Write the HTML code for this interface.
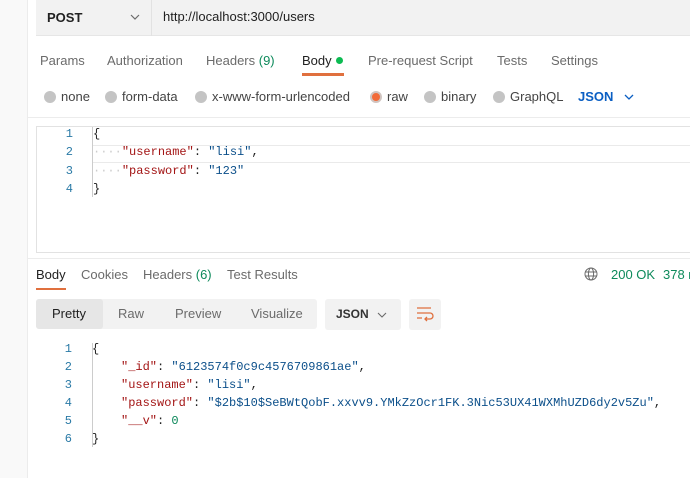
<!DOCTYPE html>
<html><head><meta charset="utf-8"><style>
*{margin:0;padding:0;box-sizing:border-box}
body{width:690px;height:478px;overflow:hidden;background:#fff;font-family:"Liberation Sans",sans-serif;font-size:13px;color:#212121;position:relative}
.a{position:absolute;white-space:nowrap}
.g{color:#6b6b6b}
.m{font-family:"Liberation Mono",monospace;font-size:12px}
.ln{color:#2a7aa6;text-align:right;width:20px}
.k{color:#a31515}.s{color:#0b4f8a}.n{color:#098658}
.dot{position:absolute;width:12px;height:12px;border-radius:50%;background:#c4c4c4}
</style></head><body>
<div class="a" style="left:0;top:0;width:28px;height:478px;background:#f9f9f9;border-right:1px solid #ececec"></div>
<div class="a" style="left:36px;top:0;width:654px;height:36px;background:#f2f2f2;border-bottom:1px solid #e6e6e6"></div>
<div class="a" style="left:151px;top:0;width:1px;height:36px;background:#e2e2e2"></div>
<div class="a" style="left:47px;top:10px;font-weight:bold;font-size:13px;color:#212121">POST</div>
<svg class="a" style="left:130px;top:13px" width="10" height="8"><path d="M1 2l4 4 4-4" fill="none" stroke="#6b6b6b" stroke-width="1.2"/></svg>
<div class="a" style="left:163px;top:9px;color:#212121">http://localhost:3000/users</div>

<div class="a g" style="left:40px;top:53px">Params</div>
<div class="a g" style="left:107px;top:53px">Authorization</div>
<div class="a g" style="left:206px;top:53px">Headers <span style="color:#0d8a5b">(9)</span></div>
<div class="a" style="left:302px;top:53px;color:#212121">Body</div>
<div class="a" style="left:336px;top:57px;width:7px;height:7px;border-radius:50%;background:#0cbb52"></div>
<div class="a" style="left:302px;top:73px;width:42px;height:3px;background:#e0703e"></div>
<div class="a g" style="left:368px;top:53px">Pre-request Script</div>
<div class="a g" style="left:497px;top:53px">Tests</div>
<div class="a g" style="left:551px;top:53px">Settings</div>

<div class="dot" style="left:44px;top:91px"></div><div class="a g" style="left:61px;top:89px;color:#444">none</div>
<div class="dot" style="left:105px;top:91px"></div><div class="a" style="left:122px;top:89px;color:#444">form-data</div>
<div class="dot" style="left:195px;top:91px"></div><div class="a" style="left:212px;top:89px;color:#444">x-www-form-urlencoded</div>
<div class="dot" style="left:370px;top:91px;background:#f26b3a;border:2px solid #d0c4c0"></div><div class="a" style="left:387px;top:89px;color:#444">raw</div>
<div class="dot" style="left:424px;top:91px"></div><div class="a" style="left:441px;top:89px;color:#444">binary</div>
<div class="dot" style="left:493px;top:91px"></div><div class="a" style="left:510px;top:89px;color:#444">GraphQL</div>
<div class="a" style="left:578px;top:89px;color:#0b5fc3;font-weight:bold">JSON</div>
<svg class="a" style="left:624px;top:93px" width="10" height="8"><path d="M1 2l4 4 4-4" fill="none" stroke="#0b5fc3" stroke-width="1.3"/></svg>
<div class="a" style="left:28px;top:117px;width:662px;height:1px;background:#ececec"></div>

<div class="a" style="left:36px;top:126px;width:660px;height:127px;border:1px solid #e2e2e2"></div>
<div class="a" style="left:93px;top:145px;width:597px;height:18px;border-top:1px solid #eaeaea;border-bottom:1px solid #eaeaea"></div>
<div class="a m ln" style="left:53px;top:127px">1</div>
<div class="a m ln" style="left:53px;top:145px">2</div>
<div class="a m ln" style="left:53px;top:164px">3</div>
<div class="a m ln" style="left:53px;top:182px">4</div>
<div class="a m" style="left:93px;top:127px">{</div>
<div class="a m" style="left:93px;top:145px"><span style="color:#ccc">····</span><span class="k">"username"</span>: <span class="s">"lisi"</span>,</div>
<div class="a m" style="left:93px;top:164px"><span style="color:#ccc">····</span><span class="k">"password"</span>: <span class="s">"123"</span></div>
<div class="a m" style="left:93px;top:182px">}</div>
<div class="a" style="left:92px;top:127px;width:1px;height:70px;background:#ccc"></div>

<div class="a" style="left:28px;top:258px;width:662px;height:1px;background:#ececec"></div>
<div class="a" style="left:36px;top:267px;color:#212121">Body</div>
<div class="a" style="left:36px;top:288px;width:30px;height:2px;background:#e0703e"></div>
<div class="a g" style="left:81px;top:267px">Cookies</div>
<div class="a g" style="left:143px;top:267px">Headers <span style="color:#0d8a5b">(6)</span></div>
<div class="a g" style="left:227px;top:267px">Test Results</div>
<svg class="a" style="left:584px;top:267px" width="14" height="14" fill="none" stroke="#6b6b6b" stroke-width="1"><circle cx="7" cy="7" r="6"/><ellipse cx="7" cy="7" rx="2.6" ry="6"/><path d="M1 5h12M1 9h12"/></svg>
<div class="a" style="left:611px;top:267px;color:#0d8a5b">200 OK</div>
<div class="a" style="left:663px;top:267px;color:#0d8a5b">378 ms</div>

<div class="a" style="left:36px;top:299px;width:281px;height:30px;background:#f2f2f2;border-radius:3px"></div>
<div class="a" style="left:36px;top:299px;width:67px;height:30px;background:#e6e6e6;border-radius:3px"></div>
<div class="a" style="left:52px;top:306px;color:#212121">Pretty</div>
<div class="a g" style="left:118px;top:306px">Raw</div>
<div class="a g" style="left:175px;top:306px">Preview</div>
<div class="a g" style="left:251px;top:306px">Visualize</div>
<div class="a" style="left:325px;top:299px;width:76px;height:31px;background:#f2f2f2;border-radius:3px"></div>
<div class="a" style="left:336px;top:307px;font-size:12px;font-weight:bold;color:#333">JSON</div>
<svg class="a" style="left:377px;top:311px" width="10" height="8"><path d="M1 2l4 4 4-4" fill="none" stroke="#6b6b6b" stroke-width="1.1"/></svg>
<div class="a" style="left:409px;top:299px;width:32px;height:31px;background:#f2f2f2;border-radius:3px"></div>
<svg class="a" style="left:416px;top:306px" width="18" height="16" fill="none" stroke="#e0703e" stroke-width="1.3"><path d="M1 2h14M1 7h13a3 3 0 0 1 0 6h-5M11 11l-2 2 2 2M1 12h5"/></svg>

<div class="a m ln" style="left:52px;top:342px">1</div>
<div class="a m ln" style="left:52px;top:360px">2</div>
<div class="a m ln" style="left:52px;top:378px">3</div>
<div class="a m ln" style="left:52px;top:396px">4</div>
<div class="a m ln" style="left:52px;top:414px">5</div>
<div class="a m ln" style="left:52px;top:432px">6</div>
<div class="a" style="left:92px;top:343px;width:1px;height:104px;background:#ccc"></div>
<div class="a m" style="left:92px;top:342px">{</div>
<div class="a m" style="left:121px;top:360px"><span class="k">"_id"</span>: <span class="s">"6123574f0c9c4576709861ae"</span>,</div>
<div class="a m" style="left:121px;top:378px"><span class="k">"username"</span>: <span class="s">"lisi"</span>,</div>
<div class="a m" style="left:121px;top:396px"><span class="k">"password"</span>: <span class="s">"$2b$10$SeBWtQobF.xxvv9.YMkZzOcr1FK.3Nic53UX41WXMhUZD6dy2v5Zu"</span>,</div>
<div class="a m" style="left:121px;top:414px"><span class="k">"__v"</span>: <span class="n">0</span></div>
<div class="a m" style="left:92px;top:432px">}</div>
</body></html>
